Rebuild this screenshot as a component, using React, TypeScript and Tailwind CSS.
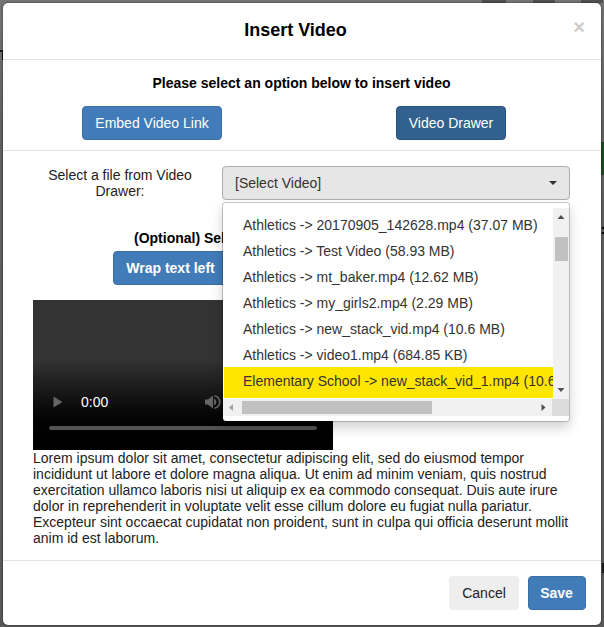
import { clsx } from 'clsx';

const videos = [
  'Athletics -> 20170905_142628.mp4 (37.07 MB)',
  'Athletics -> Test Video (58.93 MB)',
  'Athletics -> mt_baker.mp4 (12.62 MB)',
  'Athletics -> my_girls2.mp4 (2.29 MB)',
  'Athletics -> new_stack_vid.mp4 (10.6 MB)',
  'Athletics -> video1.mp4 (684.85 KB)',
  'Elementary School -> new_stack_vid_1.mp4 (10.6 MB)',
];

const primary = 'h-[34px] rounded-[4px] border border-[#3a6fa5] bg-[#427cb8] text-white';

function VideoMenu() {
  return (
    <div className="absolute left-0 top-[36px] z-10 h-[220px] w-[348px] rounded-[4px] border border-black/20 bg-white bg-clip-padding pt-[5px] shadow-[0_6px_12px_rgba(0,0,0,0.175)]">
      <div className="flex h-[191px]">
        <ul className="w-[330px] shrink-0 overflow-hidden pl-px pt-1">
          {videos.map((video, i) => (
            <li
              key={video}
              className={clsx(
                'h-[26px] overflow-hidden whitespace-nowrap pl-[19px] leading-[26px] text-[#333]',
                i === videos.length - 1 && '-mt-px h-[31px] bg-[#ffe600] leading-[28px]'
              )}
            >
              {video}
            </li>
          ))}
        </ul>
        {/* Vertical scrollbar */}
        <div className="flex w-4 flex-col items-center bg-[#f1f1f1]">
          <svg className="h-[29px] w-4" viewBox="0 0 16 29">
            <path d="M4.5 11 8 7l3.5 4z" fill="#505050" />
          </svg>
          <div className="h-6 w-[13px] bg-[#c1c1c1]" />
          <svg className="mt-auto h-[17px] w-4" viewBox="0 0 16 17">
            <path d="M4.5 6h7L8 10z" fill="#505050" />
          </svg>
        </div>
      </div>
      {/* Horizontal scrollbar */}
      <div className="flex h-[17px]">
        <div className="flex flex-1 items-center bg-[#f1f1f1]">
          <svg className="h-[17px] w-[19px] shrink-0" viewBox="0 0 19 17">
            <path d="M10 5v7L6 8.500z" fill="#a3a3a3" />
          </svg>
          <div className="h-[13px] w-[190px] bg-[#c1c1c1]" />
          <svg className="ml-auto h-[17px] w-[17px]" viewBox="0 0 17 17">
            <path d="M6.500 5v7l4-3.500z" fill="#505050" />
          </svg>
        </div>
        <div className="w-[17px] bg-[#dcdcdc]" />
      </div>
    </div>
  );
}

function VideoPlayer() {
  return (
    <div className="flex h-[150px] w-[300px] flex-col justify-end bg-linear-to-b from-[#333] from-40% to-black">
      <div className="flex h-12 items-center pl-5">
        <svg className="h-3 w-[10px]" viewBox="0 0 10 12">
          <path d="M.5.5v11l9-5.500z" fill="#666" />
        </svg>
        <span className="ml-[18px] text-white">0:00</span>
        <svg className="ml-[97px] h-4 w-4" viewBox="0 0 16 16">
          <path d="M0 5.500h3L8 1.500v13l-5-4H0z" fill="#666" />
          <path d="M9 4.500c3 1.500 3 5.500 0 7z" fill="#666" />
          <path d="M9.500 1.700c7 2 7 10.600 0 12.600" fill="none" stroke="#666" strokeWidth="1.700" />
        </svg>
      </div>
      <div className="mb-5 ml-4 mr-4 h-1 rounded-full bg-[#525252]" />
    </div>
  );
}

export default function App() {
  return (
    <div className="relative h-[627px] w-[604px] overflow-hidden bg-linear-to-b from-[#747474] from-0% via-[#606060] via-20% to-[#585858] p-[3px] font-['Liberation_Sans',Arial,sans-serif] text-[14px] leading-4 text-[#222]">
      {/* Dimmed page showing around the dialog */}
      <div className="absolute left-[482px] top-0 h-[3px] w-6 bg-[#505050]" />
      <div className="absolute left-[533px] top-0 h-[3px] w-[22px] bg-[#505050]" />
      <div className="absolute left-[581px] top-0 h-[3px] w-[22px] bg-[#505050]" />
      <div className="absolute left-0 top-[50px] h-[2px] w-[3px] bg-[#1a1a1a]" />
      <div className="absolute left-[2px] top-[50px] h-[10px] w-px bg-[#1a1a1a]" />
      <div className="absolute right-0 top-[142px] h-[33px] w-1 bg-[#1b4a1d]" />
      <div className="absolute right-0 top-[227px] h-[2px] w-[2px] bg-black" />
      <div className="absolute right-0 top-[232px] h-[2px] w-[2px] bg-black" />
      <div className="absolute right-0 top-[563px] h-[10px] w-[2px] bg-[#1a1a1a]" />

      <div className="relative h-[622px] w-[598px] rounded-[5px] bg-white shadow-[0_0_2px_rgba(0,0,0,0.7)]">
        <div className="relative h-[57px] border-b border-[#e2e2e2] pr-[13px] pt-[17px]">
          <h4 className="text-center text-[18px] font-bold leading-5 text-black">Insert Video</h4>
          <button className="absolute right-[16px] top-[14px] text-[20px] font-bold leading-5 text-[#ccc]" aria-label="Close">
            ×
          </button>
        </div>

        <div className="h-[91px] border-b border-[#e2e2e2] pt-[15px]">
          <p className="pr-px text-center font-bold text-black">Please select an option below to insert video</p>
          <div className="mt-[15px] flex justify-between pl-[79px] pr-[95px]">
            <button className={clsx(primary, 'w-[140px]')}>Embed Video Link</button>
            <button className="h-[34px] w-[110px] rounded-[4px] border border-[#28527d] bg-[#32618f] text-white">
              Video Drawer
            </button>
          </div>
        </div>

        <div className="h-[410px] border-b border-[#e2e2e2] px-[30px] pt-[15px]">
          <div className="flex">
            <label className="w-[189px] pl-3 pr-[27px] pt-px text-center">Select a file from Video Drawer:</label>
            <div className="relative">
              <button className="flex h-[34px] w-[348px] items-center justify-between rounded-[4px] border border-[#adadad] bg-[#e6e6e6] px-3 text-[#333]">
                [Select Video]
                <span className="border-x-4 border-t-4 border-x-transparent border-t-[#333]" />
              </button>
              <VideoMenu />
            </div>
          </div>
          <div className="mt-[30px] pl-[101px] font-bold text-black">(Optional) Select</div>
          <button className={clsx(primary, 'ml-20 mt-[5px] block w-[115px] whitespace-nowrap font-bold')}>
            Wrap text left
          </button>
          <div className="mt-[15px]">
            <VideoPlayer />
          </div>
          <p>
            Lorem ipsum dolor sit amet, consectetur adipiscing elit, sed do eiusmod tempor incididunt ut labore et
            dolore magna aliqua. Ut enim ad minim veniam, quis nostrud exercitation ullamco laboris nisi ut aliquip ex
            ea commodo consequat. Duis aute irure dolor in reprehenderit in voluptate velit esse cillum dolore eu
            fugiat nulla pariatur. Excepteur sint occaecat cupidatat non proident, sunt in culpa qui officia deserunt
            mollit anim id est laborum.
          </p>
        </div>

        <div className="flex justify-end gap-[9px] pr-[15px] pt-[15px]">
          <button className="h-[34px] w-[70px] rounded-[4px] bg-[#eee] text-[#222]">Cancel</button>
          <button className={clsx(primary, 'w-[58px] pr-px font-bold')}>Save</button>
        </div>
      </div>
    </div>
  );
}
